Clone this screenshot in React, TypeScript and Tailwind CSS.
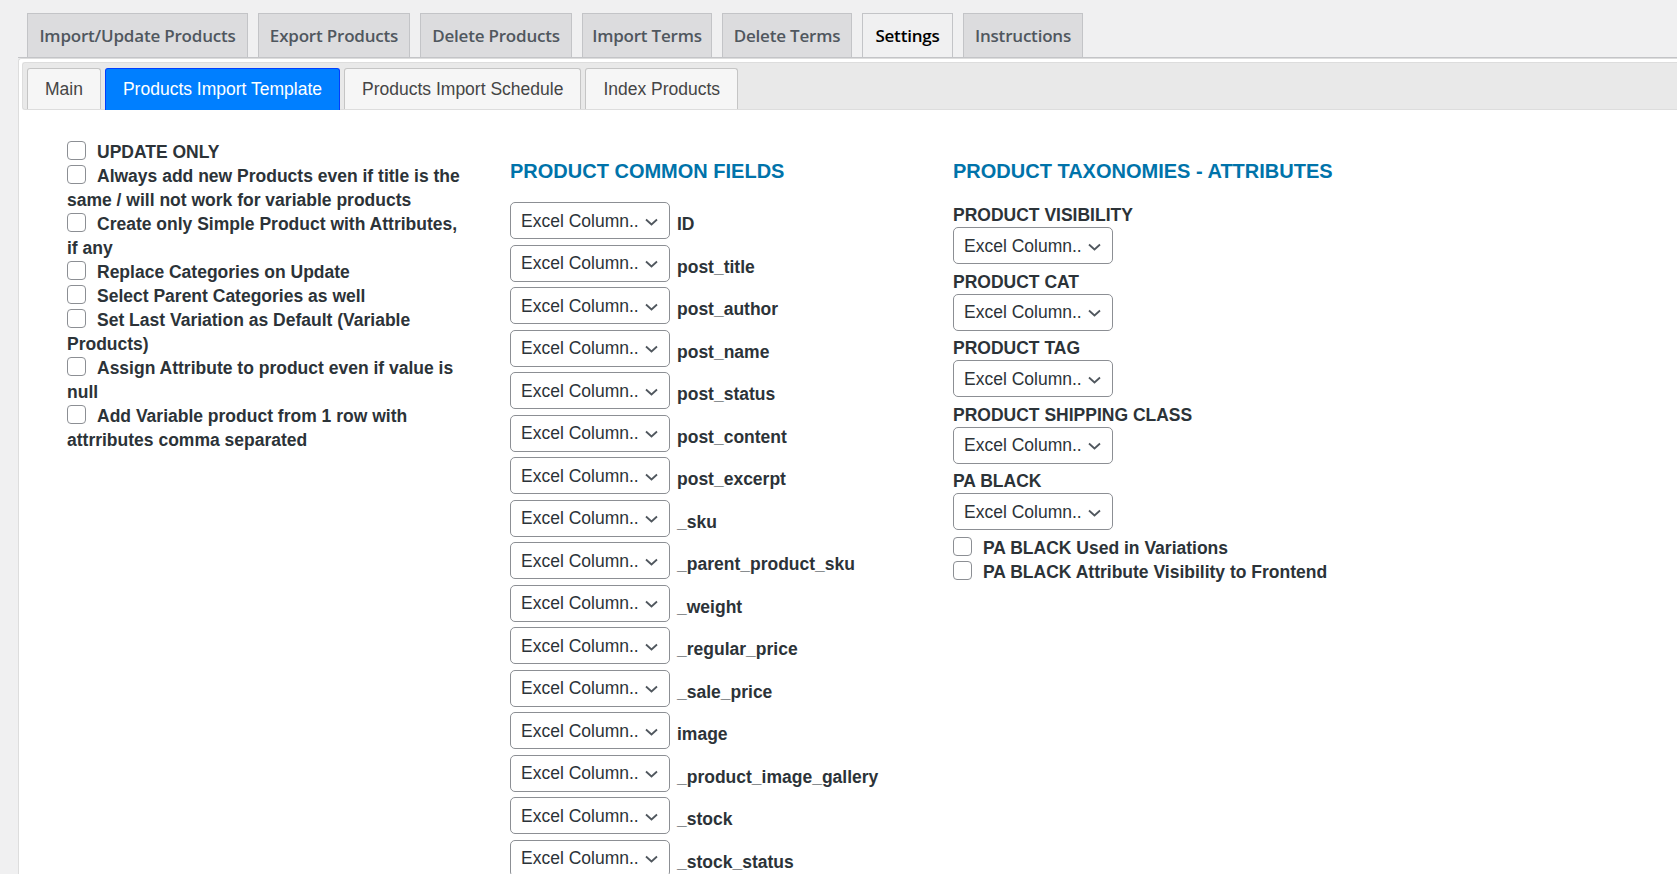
import { ReactNode } from "react";

const topTabs = [
    { label: "Import/Update Products", w: "w-[221px]" },
    { label: "Export Products", w: "w-[152px]" },
    { label: "Delete Products", w: "w-[152px]" },
    { label: "Import Terms", w: "w-[130px]" },
    { label: "Delete Terms", w: "w-[130px]" },
    { label: "Settings", w: "w-[91px]", active: true },
    { label: "Instructions", w: "w-[120px]" },
];

const subTabs = [
    { label: "Main" },
    { label: "Products Import Template", active: true },
    { label: "Products Import Schedule" },
    { label: "Index Products" },
];

const options = [
    "UPDATE ONLY",
    "Always add new Products even if title is the same / will not work for variable products",
    "Create only Simple Product with Attributes, if any",
    "Replace Categories on Update",
    "Select Parent Categories as well",
    "Set Last Variation as Default (Variable Products)",
    "Assign Attribute to product even if value is null",
    "Add Variable product from 1 row with attrributes comma separated",
];

const commonFields = [
    "ID",
    "post_title",
    "post_author",
    "post_name",
    "post_status",
    "post_content",
    "post_excerpt",
    "_sku",
    "_parent_product_sku",
    "_weight",
    "_regular_price",
    "_sale_price",
    "image",
    "_product_image_gallery",
    "_stock",
    "_stock_status",
];

const taxonomies = ["PRODUCT VISIBILITY", "PRODUCT CAT", "PRODUCT TAG", "PRODUCT SHIPPING CLASS", "PA BLACK"];

const Checkbox = () => (
    <span className="inline-block w-[19px] h-[19px] mr-[11px] align-[-2px] rounded-[4px] border border-[#8c8f94] bg-white" />
);

const Select = () => (
    <div className="flex items-center justify-between w-[160px] h-[37px] shrink-0 pl-[10px] pr-[11px] rounded-[5px] border border-[#8c8f94] bg-white text-[17.5px] font-normal text-[#2c3338]">
        <span>Excel Column..</span>
        <svg width="13" height="8" viewBox="0 0 13 8" className="mt-[2px]">
            <polyline points="1,1.5 6.5,6.5 12,1.5" fill="none" stroke="#50575e" strokeWidth="1.8" />
        </svg>
    </div>
);

const Heading = ({ children }: { children: ReactNode }) => (
    <h2 className="text-[20px] leading-[24px] font-bold text-[#0073aa]">{children}</h2>
);

const App = () => {
    return (
        <div className="w-full h-[874px] overflow-hidden bg-[#f0f0f1] pl-[18px] font-['Liberation_Sans',Arial,sans-serif]">
            {/* wordpress nav tabs */}
            <div className="flex gap-[10px] pt-[13px] pl-[9px] border-b border-[#c3c4c7]">
                {topTabs.map((tab) => (
                    <div
                        key={tab.label}
                        className={`${tab.w} h-[45px] -mb-px flex items-center justify-center border border-[#c3c4c7] font-['Open_Sans',sans-serif] font-semibold text-[17px] tracking-[-0.2px] ${
                            tab.active ? "bg-[#f0f0f1] text-black" : "bg-[#dcdcde] text-[#50575e]"
                        }`}
                    >
                        {tab.label}
                    </div>
                ))}
            </div>

            <div className="bg-white border-t border-l border-[#dddddd] rounded-tl-[3px] pt-[3px] pl-[3px] h-full">
                {/* jquery ui tabs */}
                <div className="flex items-start gap-[4px] pt-[5px] pl-[4px] bg-[#e9e9e9] border-t border-l border-b border-[#dddddd] rounded-l-[3px]">
                    {subTabs.map((tab) =>
                        tab.active ? (
                            <div
                                key={tab.label}
                                className="h-[42px] -mb-px px-[17px] flex items-center rounded-t-[3px] border border-b-0 border-[#003eff] bg-[#007fff] text-white text-[17.5px]"
                            >
                                {tab.label}
                            </div>
                        ) : (
                            <div
                                key={tab.label}
                                className="h-[41px] px-[17px] flex items-center rounded-t-[3px] border border-b-0 border-[#c5c5c5] bg-[#f6f6f6] text-[#454545] text-[17.5px]"
                            >
                                {tab.label}
                            </div>
                        )
                    )}
                </div>

                <div className="flex pl-[45px] text-[17.5px] leading-[24px] font-bold text-[#2c3338]">
                    <div className="w-[396px] shrink-0 pt-[30px]">
                        {options.map((text) => (
                            <div key={text}>
                                <Checkbox />
                                {text}
                            </div>
                        ))}
                    </div>

                    <div className="w-[443px] shrink-0 ml-[47px] pt-[49px]">
                        <Heading>PRODUCT COMMON FIELDS</Heading>
                        <div className="flex flex-col gap-[5.5px] mt-[19px]">
                            {commonFields.map((field) => (
                                <div key={field} className="flex items-center">
                                    <Select />
                                    <span className="ml-[7px] pt-[7px]">{field}</span>
                                </div>
                            ))}
                        </div>
                    </div>

                    <div className="shrink-0 pt-[49px]">
                        <Heading>PRODUCT TAXONOMIES - ATTRIBUTES</Heading>
                        <div className="flex flex-col gap-[5.5px] mt-[20px]">
                            {taxonomies.map((tax) => (
                                <div key={tax}>
                                    <div>{tax}</div>
                                    <Select />
                                </div>
                            ))}
                            <div>
                                <div>
                                    <Checkbox />
                                    PA BLACK Used in Variations
                                </div>
                                <div>
                                    <Checkbox />
                                    PA BLACK Attribute Visibility to Frontend
                                </div>
                            </div>
                        </div>
                    </div>
                </div>
            </div>
        </div>
    );
};

export default App;
